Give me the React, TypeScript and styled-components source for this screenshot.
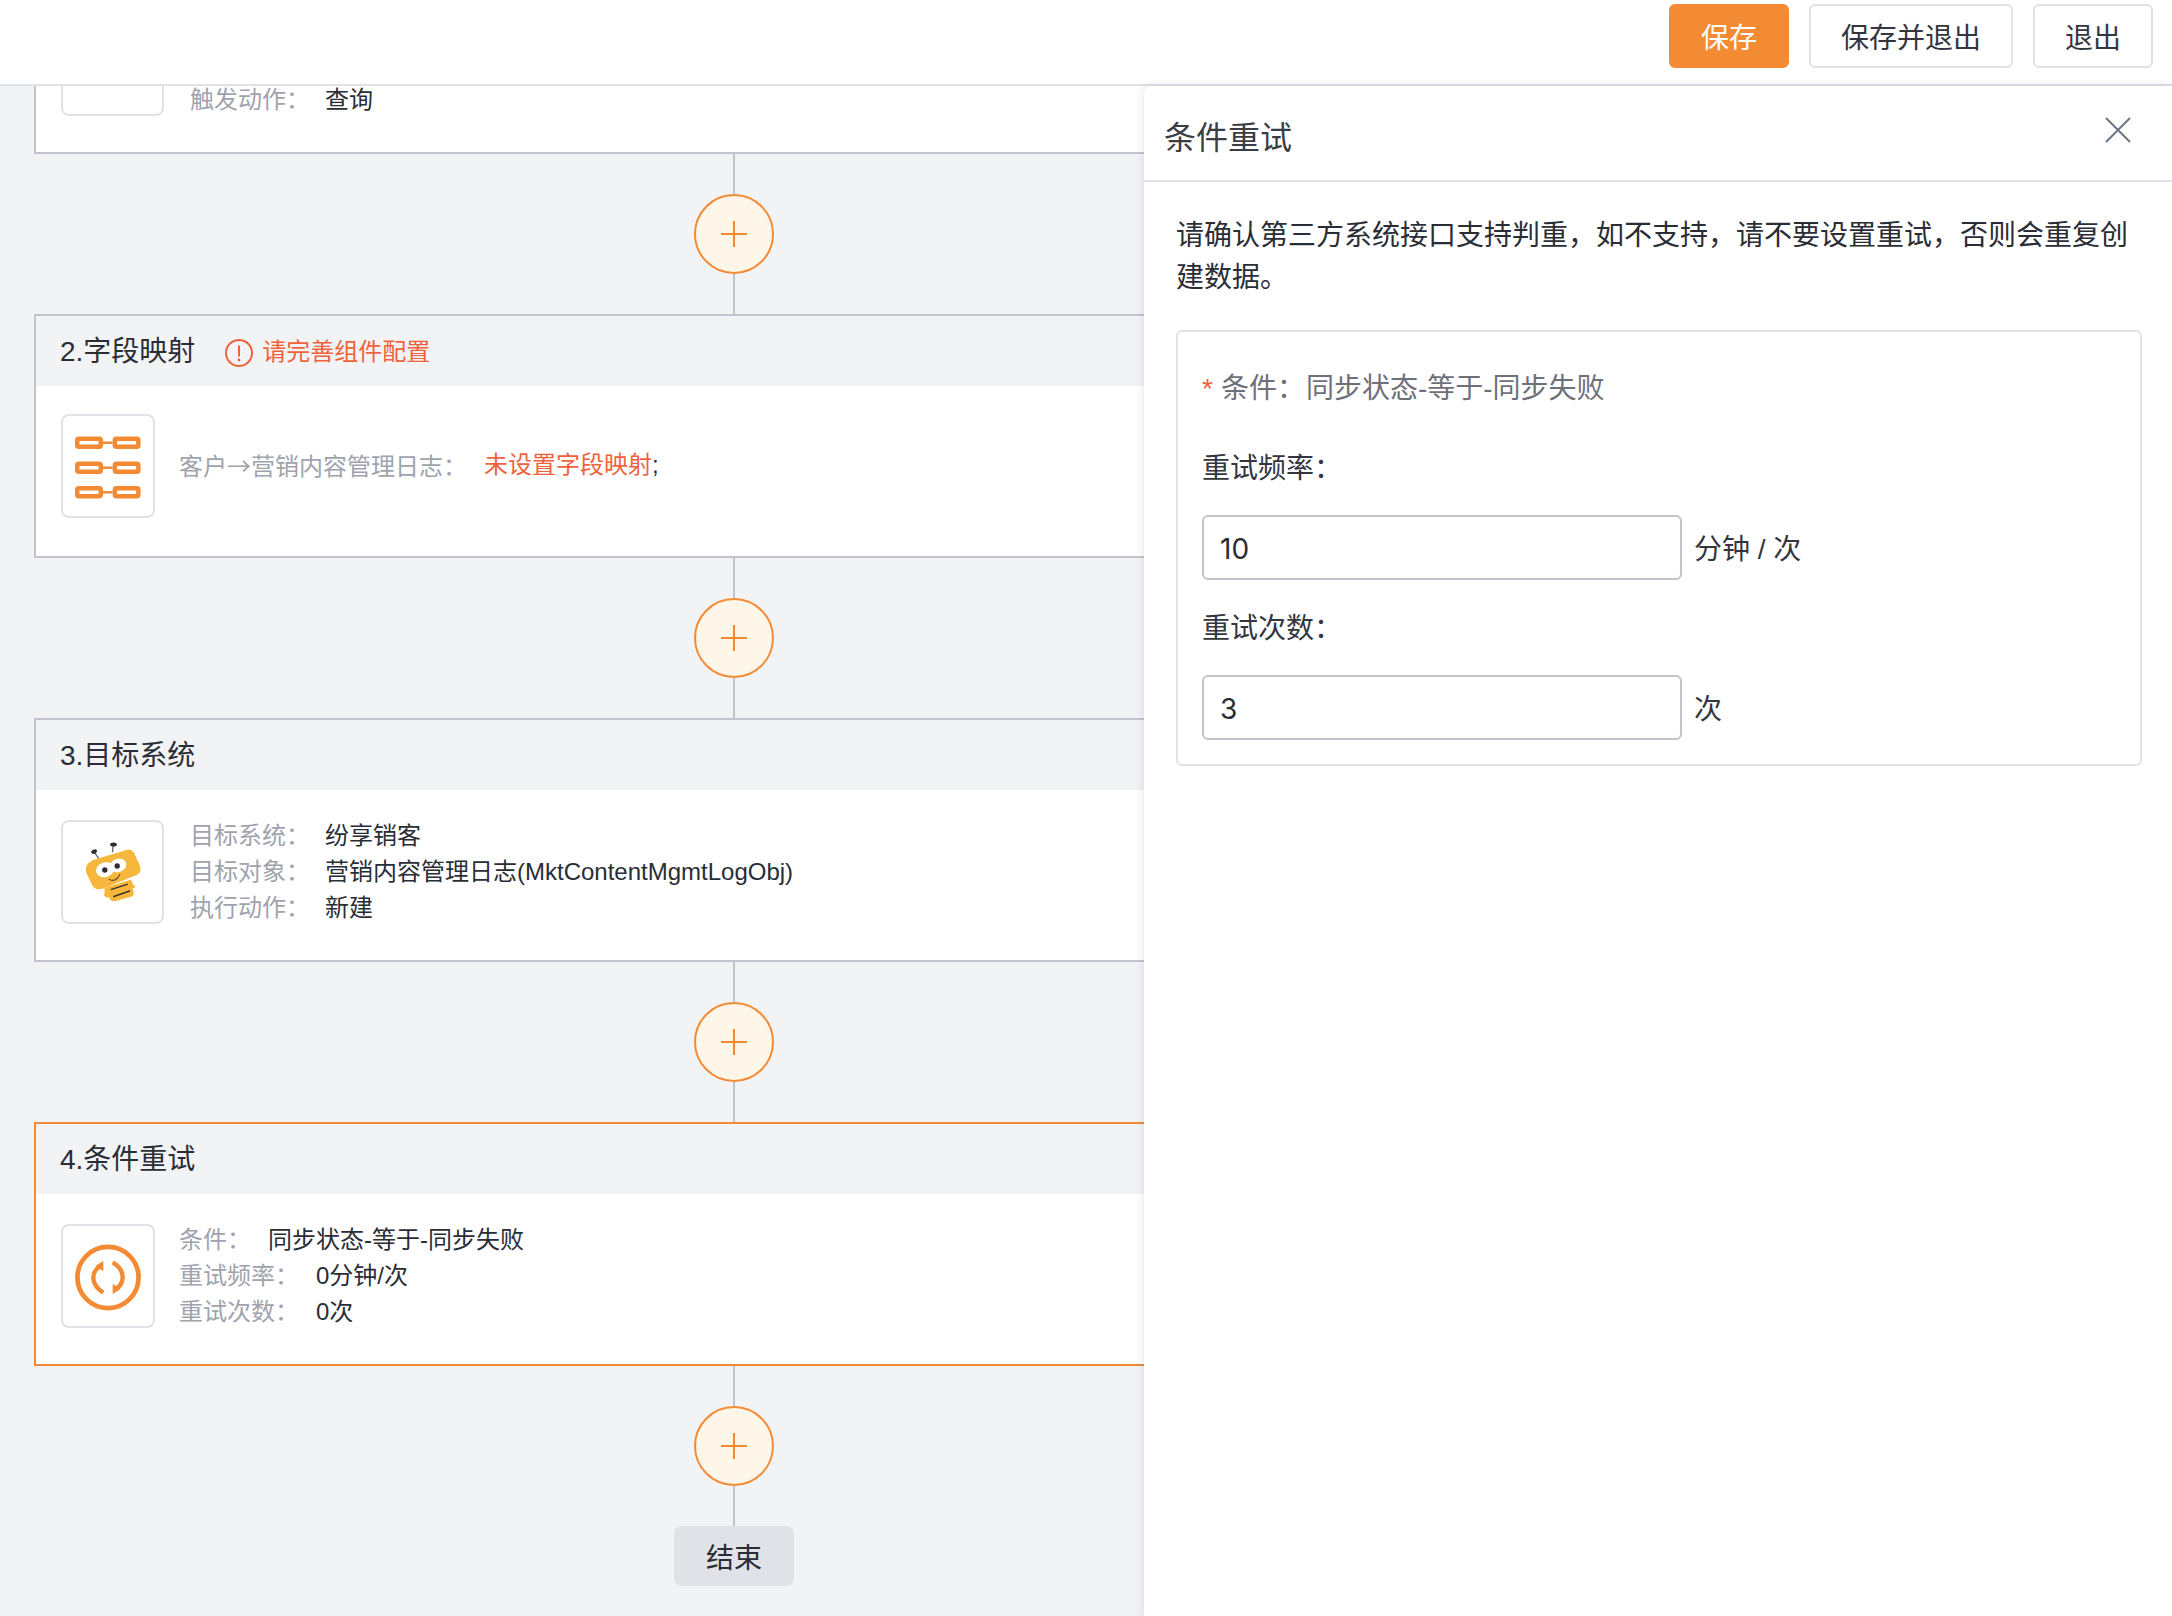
import React from "react";
import styled, { createGlobalStyle } from "styled-components";

const ORANGE = "#f28b33";
const RED = "#f0623c";
const LINE = "#c1c3cd";
const LIGHT = "#e1e2e8";
const FONT = `"Liberation Sans", "Noto Sans CJK SC", sans-serif`;

const GlobalStyle = createGlobalStyle`
	html, body {
		margin: 0;
		padding: 0;
		background: #f2f3f5;
		font-family: ${FONT};
		color: #2a2d36;
	}
	* {
		box-sizing: border-box;
	}
`;

const Page = styled.div`
	position: relative;
	width: 2172px;
	height: 1616px;
	overflow: hidden;
	display: flex;
	flex-direction: column;
`;

const TopBar = styled.header`
	flex: none;
	height: 86px;
	padding: 4px 19px 0 0;
	display: flex;
	justify-content: flex-end;
	gap: 20px;
	background: #fff;
	border-bottom: 2px solid ${LIGHT};
`;

const ToolButton = styled.button<{ $primary?: boolean }>`
	height: 64px;
	padding: 0 30px;
	font-family: ${FONT};
	font-size: 28px;
	color: ${(p) => (p.$primary ? "#fff" : "#33363f")};
	background: ${(p) => (p.$primary ? ORANGE : "#fff")};
	border: 2px solid ${(p) => (p.$primary ? ORANGE : LIGHT)};
	border-radius: 6px;
`;

const Canvas = styled.main`
	flex: 1;
	min-height: 0;
	overflow: hidden;
	padding-left: 34px;
`;

const Flow = styled.div`
	width: 1400px;
	margin-top: -176px;
	display: flex;
	flex-direction: column;
	align-items: center;
`;

const Step = styled.section<{ $active?: boolean }>`
	width: 100%;
	height: 244px;
	display: flex;
	flex-direction: column;
	border: 2px solid ${(p) => (p.$active ? ORANGE : LINE)};
	background: #fff;
`;

const StepHead = styled.div`
	flex: none;
	height: 70px;
	padding: 0 0 4px 24px;
	display: flex;
	align-items: center;
	background: #f2f3f5;
	font-size: 28px;
	color: #2a2d36;
`;

const Warning = styled.span`
	margin-left: 30px;
	display: flex;
	align-items: center;
	gap: 9px;
	font-size: 24px;
	color: ${RED};
	svg {
		margin-top: 8px;
	}
`;

const StepBody = styled.div<{ $compact?: boolean }>`
	flex: 1;
	padding: ${(p) => (p.$compact ? 28 : 30)}px 0 0 25px;
	display: flex;
	align-items: flex-start;
	gap: 26px;
`;

const IconBox = styled.div<{ $wide?: boolean }>`
	flex: none;
	width: ${(p) => (p.$wide ? 103 : 94)}px;
	height: 104px;
	display: flex;
	border: 2px solid ${LIGHT};
	border-radius: 8px;
	background: #fff;
	svg {
		display: block;
		width: 100%;
		height: 100%;
	}
`;

const RowLabel = styled.span`
	margin-right: 15px;
	color: #a0a3ad;
`;

const Rows = styled.div<{ $tight?: boolean }>`
	height: 104px;
	margin-left: ${(p) => (p.$tight ? -2 : 0)}px;
	display: flex;
	flex-direction: column;
	justify-content: center;
	font-size: 24px;
	line-height: 36px;
	${RowLabel} {
		margin-right: ${(p) => (p.$tight ? 17 : 15)}px;
	}
`;

const Row = styled.div`
	display: flex;
	flex: none;
	min-height: 36px;
	color: #2a2d36;
`;

const Arrow = styled.span`
	font-family: "Noto Sans CJK SC", sans-serif;
`;

const Missing = styled.span`
	color: ${RED};
`;

const Link = styled.div`
	flex: none;
	width: 2px;
	height: 40px;
	background: ${LINE};
`;

const AddButton = styled.button`
	flex: none;
	width: 80px;
	height: 80px;
	padding: 0;
	display: flex;
	align-items: center;
	justify-content: center;
	border: 2px solid ${ORANGE};
	border-radius: 50%;
	background: #fef6e8;
`;

const EndNode = styled.div`
	flex: none;
	width: 120px;
	height: 60px;
	display: flex;
	align-items: center;
	justify-content: center;
	border-radius: 8px;
	background: ${LIGHT};
	font-size: 28px;
	color: #2a2d36;
`;

const Drawer = styled.aside`
	position: absolute;
	top: 86px;
	left: 1144px;
	right: 0;
	bottom: 0;
	background: #fff;
	border-top-left-radius: 8px;
	box-shadow: 0 0 10px rgba(40, 45, 60, 0.14);
`;

const DrawerHead = styled.div`
	height: 96px;
	padding: 4px 41px 0 20px;
	display: flex;
	align-items: center;
	justify-content: space-between;
	border-bottom: 2px solid ${LIGHT};
	font-size: 32px;
	color: #3a3d46;
`;

const CloseIcon = styled.svg`
	display: block;
	width: 26px;
	height: 26px;
	margin-top: -11px;
`;

const DrawerBody = styled.div`
	padding: 33px 30px 0 32px;
`;

const Notice = styled.p`
	margin: 0 0 31px;
	font-size: 28px;
	line-height: 42px;
	color: #2a2d36;
`;

const FormCard = styled.div`
	padding: 36px 24px 24px;
	border: 2px solid ${LIGHT};
	border-radius: 6px;
	font-size: 28px;
	line-height: 42px;
`;

const Condition = styled.div`
	margin-bottom: 38px;
	color: #6e7079;
`;

const Star = styled.span`
	margin-right: 8px;
	color: ${RED};
`;

const ConditionKey = styled.span`
	margin-right: 1px;
`;

const FieldLabel = styled.div`
	margin-bottom: 25px;
	color: #33363f;
`;

const FieldRow = styled.div`
	display: flex;
	align-items: center;
	gap: 12px;
	color: #33363f;
	& + ${FieldLabel} {
		margin-top: 28px;
	}
`;

const Unit = styled.span`
	padding-top: 4px;
`;

const NumberInput = styled.input`
	width: 480px;
	height: 65px;
	padding: 2px 16px 0;
	font-family: "Inter", ${FONT};
	font-size: 28px;
	color: #2a2d36;
	background: #fff;
	border: 2px solid ${LINE};
	border-radius: 6px;
	outline: none;
`;

const PlusIcon = () => (
	<svg width="26" height="26" viewBox="0 0 26 26">
		<path d="M13 0v26M0 13h26" stroke={ORANGE} strokeWidth="2" fill="none" />
	</svg>
);

const AlertIcon = () => (
	<svg width="28" height="28" viewBox="0 0 28 28" fill="none">
		<circle cx="14" cy="14" r="13" stroke={RED} strokeWidth="2" />
		<path d="M14 6.5v11" stroke={RED} strokeWidth="2" />
		<circle cx="14" cy="21" r="1.4" fill={RED} />
	</svg>
);

const MappingIcon = () => (
	<svg viewBox="0 0 90 100" fill="none">
		{[26.7, 51.7, 76.3].map((y) => (
			<g key={y} stroke={ORANGE}>
				<rect x="14.25" y={y - 4} width="23.5" height="8" rx="1.5" strokeWidth="4.5" />
				<rect x="51.85" y={y - 4} width="23.5" height="8" rx="1.5" strokeWidth="4.5" />
				<path d={`M40 ${y}h9.6`} strokeWidth="2.5" />
			</g>
		))}
	</svg>
);

const BeeIcon = () => (
	<svg viewBox="98 66 296 298">
		<path d="M206 176L190 154M246 156L248 132" stroke="#666" strokeWidth="4" />
		<ellipse cx="191" cy="154" rx="9" ry="6" fill="#2e2e2e" transform="rotate(-25 191 154)" />
		<ellipse cx="249" cy="133" rx="10" ry="6" fill="#2e2e2e" />
		<path
			d="M222 262L300 238C304 240 306 248 308 254C314 256 316 260 312 262L306 264C310 276 312 284 304 288L256 302C246 304 238 300 234 290C226 292 218 288 222 280Z"
			fill="#f6b73c"
		/>
		<path d="M243 267L290 252M250 288L297 272" stroke="#3a3430" strokeWidth="4.5" strokeLinecap="round" />
		<path
			d="M190 178L286 150C298 146 308 150 312 162L326 192C332 206 332 218 318 224L218 264C200 270 190 264 184 252L170 222C160 204 170 186 190 178Z"
			fill="#f6b73c"
		/>
		<ellipse cx="224" cy="208" rx="28" ry="22" fill="#fff" transform="rotate(-18 224 208)" />
		<ellipse cx="263" cy="195" rx="25" ry="20" fill="#fff" transform="rotate(-18 263 195)" />
		<circle cx="223" cy="209" r="8" fill="#2e2e2e" />
		<circle cx="260" cy="197" r="8" fill="#2e2e2e" />
		<path d="M236 237C248 244 262 238 268 222" stroke="#4a3a20" strokeWidth="3" fill="none" strokeLinecap="round" />
	</svg>
);

const RetryIcon = () => (
	<svg viewBox="98 79 268 297" fill="none">
		<circle cx="232" cy="232" r="91" stroke={ORANGE} strokeWidth="14" />
		<path d="M206 200C180 218 182 256 218 277" stroke={ORANGE} strokeWidth="13" />
		<path d="M218 183V213L194 198Z" fill={ORANGE} />
		<path d="M258 264C284 246 282 208 246 187" stroke={ORANGE} strokeWidth="13" />
		<path d="M246 281V251L270 266Z" fill={ORANGE} />
	</svg>
);

const Connector = () => (
	<>
		<Link />
		<AddButton type="button" aria-label="添加">
			<PlusIcon />
		</AddButton>
		<Link />
	</>
);

const App = () => {
	return (
		<Page>
			<GlobalStyle />
			<TopBar>
				<ToolButton type="button" $primary>
					保存
				</ToolButton>
				<ToolButton type="button">保存并退出</ToolButton>
				<ToolButton type="button">退出</ToolButton>
			</TopBar>

			<Canvas>
				<Flow>
					{/* the first step is scrolled mostly under the top bar */}
					<Step>
						<StepHead />
						<StepBody>
							<IconBox $wide />
							<Rows>
								<Row />
								<Row />
								<Row>
									<RowLabel>触发动作：</RowLabel>
									查询
								</Row>
							</Rows>
						</StepBody>
					</Step>
					<Connector />

					<Step>
						<StepHead>
							2.字段映射
							<Warning>
								<AlertIcon />
								请完善组件配置
							</Warning>
						</StepHead>
						<StepBody $compact>
							<IconBox>
								<MappingIcon />
							</IconBox>
							<Rows $tight>
								<Row>
									<RowLabel>
										客户<Arrow>→</Arrow>营销内容管理日志：
									</RowLabel>
									<Missing>未设置字段映射</Missing>;
								</Row>
							</Rows>
						</StepBody>
					</Step>
					<Connector />

					<Step>
						<StepHead>3.目标系统</StepHead>
						<StepBody>
							<IconBox $wide>
								<BeeIcon />
							</IconBox>
							<Rows>
								<Row>
									<RowLabel>目标系统：</RowLabel>
									纷享销客
								</Row>
								<Row>
									<RowLabel>目标对象：</RowLabel>
									营销内容管理日志(MktContentMgmtLogObj)
								</Row>
								<Row>
									<RowLabel>执行动作：</RowLabel>
									新建
								</Row>
							</Rows>
						</StepBody>
					</Step>
					<Connector />

					<Step $active>
						<StepHead>4.条件重试</StepHead>
						<StepBody>
							<IconBox>
								<RetryIcon />
							</IconBox>
							<Rows $tight>
								<Row>
									<RowLabel>条件：</RowLabel>
									同步状态-等于-同步失败
								</Row>
								<Row>
									<RowLabel>重试频率：</RowLabel>
									0分钟/次
								</Row>
								<Row>
									<RowLabel>重试次数：</RowLabel>
									0次
								</Row>
							</Rows>
						</StepBody>
					</Step>
					<Connector />
					<EndNode>结束</EndNode>
				</Flow>
			</Canvas>

			<Drawer>
				<DrawerHead>
					条件重试
					<CloseIcon viewBox="0 0 26 26" fill="none">
						<path d="M1 1L25 25M25 1L1 25" stroke="#6b7685" strokeWidth="2" />
					</CloseIcon>
				</DrawerHead>
				<DrawerBody>
					<Notice>请确认第三方系统接口支持判重，如不支持，请不要设置重试，否则会重复创建数据。</Notice>
					<FormCard>
						<Condition>
							<Star>*</Star>
							<ConditionKey>条件：</ConditionKey>同步状态-等于-同步失败
						</Condition>
						<FieldLabel>重试频率：</FieldLabel>
						<FieldRow>
							<NumberInput defaultValue="10" />
							<Unit>分钟 / 次</Unit>
						</FieldRow>
						<FieldLabel>重试次数：</FieldLabel>
						<FieldRow>
							<NumberInput defaultValue="3" />
							<Unit>次</Unit>
						</FieldRow>
					</FormCard>
				</DrawerBody>
			</Drawer>
		</Page>
	);
};

export default App;
